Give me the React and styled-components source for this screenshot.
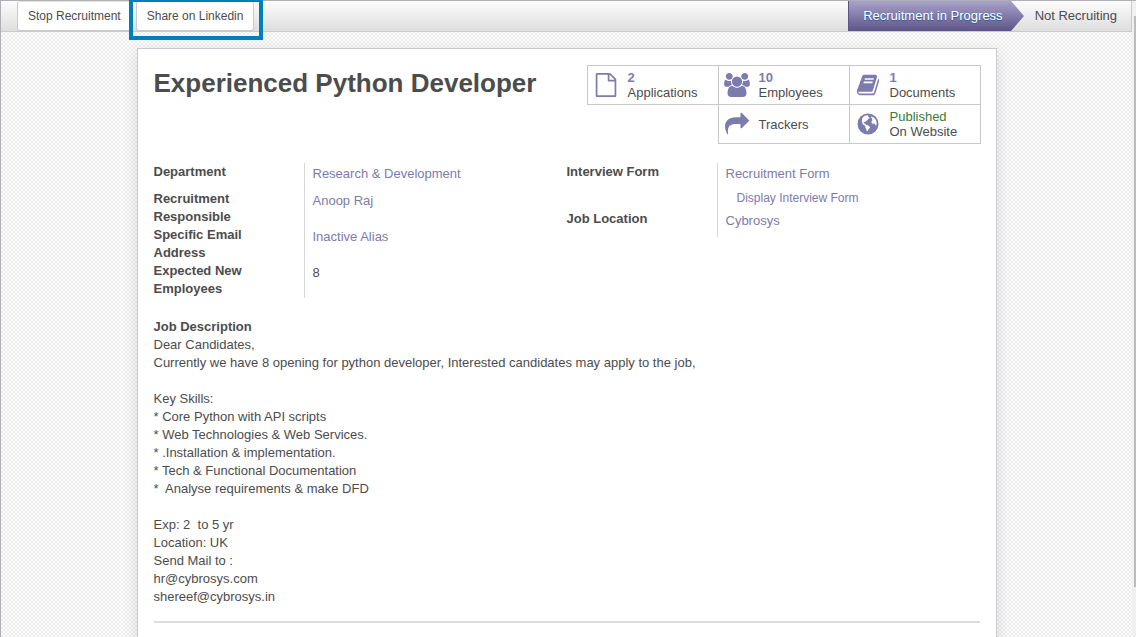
import React from "react";
import styled, { createGlobalStyle, css } from "styled-components";

const Global = createGlobalStyle`
  *, *::before, *::after { box-sizing: border-box; }
  html { height: 100%; }
  body {
    margin: 0;
    height: 100%;
    overflow: hidden;
    font: 13px/18px "Liberation Sans", Arial, sans-serif;
    color: #4c4c4c;
  }
  #root { height: 100%; }
`;

const Shell = styled.div`
  display: flex;
  height: 100%;
  border-top: 1px solid #afafb6;
  border-left: 1px solid #afafb6;
`;

const View = styled.div`
  flex: 1;
  min-width: 0;
  background: repeating-conic-gradient(#ececec 0 25%, #fdfdfd 0 50%) 0 0 / 4px 4px;
`;

const ScrollTrack = styled.div`
  flex: none;
  display: flex;
  justify-content: flex-end;
  width: 4px;
  padding-top: 15px;
  background: #f0f0f0;
`;

const ScrollThumb = styled.div`
  width: 2px;
  height: 92%;
  background: #bcbcbc;
`;

const Header = styled.header`
  display: flex;
  justify-content: space-between;
  height: 31px;
  border-right: 1px solid #cacaca;
  border-bottom: 1px solid #cacaca;
  background: linear-gradient(#fcfcfc, #dedede);
`;

const Actions = styled.div`
  display: flex;
  padding-left: 16px;
`;

const ActionButton = styled.button`
  height: 30px;
  padding: 0 10px;
  border: 1px solid #cacaca;
  border-top-color: #e4e4e4;
  border-radius: 3px;
  background: #fff;
  color: #4c4c4c;
  font: 12px/18px "Liberation Sans", Arial, sans-serif;
  white-space: nowrap;
`;

const Highlight = styled.div`
  position: relative;
  margin-left: 4px;

  &::after {
    content: "";
    position: absolute;
    inset: -3px -9px -9px -7px;
    border: 4px solid #0080bb;
    pointer-events: none;
  }
`;

const Stages = styled.ol`
  display: flex;
  margin: 0;
  padding: 0;
  list-style: none;
  line-height: 30px;
`;

const Stage = styled.li`
  display: flex;
  padding: 0 14px 0 11px;
  white-space: nowrap;

  ${(p) =>
    p.$active &&
    css`
      padding: 0 0 0 14px;
      color: #fff;
      text-shadow: 0 1px 1px #2c5590, 0 0 2px #6a92cf;
      border-left: 1px solid #5b5389;
      background: linear-gradient(#a9a2c8, #5d5589);
      background-size: calc(100% - 13px) 100%;
      background-repeat: no-repeat;
    `}
`;

const Arrow = styled.svg`
  display: block;
  width: 13px;
  height: 30px;
  margin-left: 8px;
`;

const Sheet = styled.main`
  max-width: 860px;
  min-height: 700px;
  margin: 16px auto 0;
  padding: 16px;
  border: 1px solid #c8c8d3;
  background: #fff;
  box-shadow: 0 5px 15px rgba(0, 0, 0, 0.12);
`;

const TitleRow = styled.div`
  display: flex;
  justify-content: space-between;
  align-items: flex-start;
`;

const Title = styled.h1`
  margin: 0;
  font-size: 26px;
  line-height: 36px;
`;

const Stats = styled.div`
  display: grid;
  grid-template-columns: repeat(3, 131px);
  grid-auto-rows: 39px;
  padding-bottom: 1px;
`;

const Stat = styled.button`
  display: flex;
  align-items: center;
  gap: 8px;
  margin: 0 -1px -1px 0;
  padding: 0 4px;
  border: 1px solid #c8c8c8;
  background: #fff;
  color: #4c4c4c;
  font: 13px/15px "Liberation Sans", Arial, sans-serif;
  text-align: left;

  &:nth-child(4) { grid-column: 2; }
`;

const StatIcon = styled.svg`
  flex: none;
  width: 28px;
  height: 24px;
  fill: #7c7bad;
`;

const StatText = styled.span`
  display: flex;
  flex-direction: column;
`;

const Count = styled.strong`
  color: #7c7bad;
`;

const Published = styled.span`
  color: #3a7d3a;
`;

const Groups = styled.div`
  display: grid;
  grid-template-columns: 1fr 1fr;
  align-items: start;
  margin-top: 19px;
`;

const Fields = styled.dl`
  display: grid;
  grid-template-columns: 150px 1fr;
  margin: 0;
`;

const Label = styled.dt`
  padding: 0 32px ${(p) => (p.$spaced ? 9 : 0)}px 0;
  font-weight: bold;
`;

const Value = styled.dd`
  margin: 0;
  padding: 2px 0 ${(p) => (p.$spaced ? 7 : 0)}px 8px;
  border-left: 1px solid #d8d8d8;
`;

const Link = styled.a`
  color: #7c7bad;
  text-decoration: none;
`;

const SubLink = styled(Link)`
  display: block;
  margin-top: 6px;
  padding: 0 0 3px 11px;
  font-size: 12px;
`;

const Description = styled.section`
  margin-top: 20px;
  padding-bottom: 15px;
  border-bottom: 2px solid #dcdcdc;
`;

const Heading = styled.h2`
  margin: 0;
  font-size: 13px;
  line-height: 18px;
`;

const Body = styled.p`
  margin: 0;
  white-space: pre-wrap;
`;

const DESCRIPTION = `Dear Candidates,
Currently we have 8 opening for python developer, Interested candidates may apply to the job,

Key Skills:
* Core Python with API scripts
* Web Technologies & Web Services.
* .Installation & implementation.
* Tech & Functional Documentation
*  Analyse requirements & make DFD

Exp: 2  to 5 yr
Location: UK
Send Mail to :
hr@cybrosys.com
shereef@cybrosys.in`;

const FileIcon = () => (
  <StatIcon viewBox="-150 0 2090 1792" aria-hidden="true">
    <path d="M1596 380q28 28 48 76t20 88v1152q0 40-28 68t-68 28h-1344q-40 0-68-28t-28-68v-1600q0-40 28-68t68-28h896q40 0 88 20t76 48zm-444-244v376h376q-10-29-22-41l-313-313q-12-12-41-22zm384 1528v-1024h-416q-40 0-68-28t-28-68v-416h-768v1536h1280z" />
  </StatIcon>
);

const UsersIcon = () => (
  <StatIcon viewBox="-40 0 2000 1792" aria-hidden="true">
    <path d="M593 896q-162 5-265 128h-134q-82 0-138-40.5t-56-118.5q0-353 124-353 6 0 43.5 21t97.5 42.5 119 21.5q67 0 133-23-5 37-5 66 0 139 81 256zm1071 637q0 120-73 189.5t-194 69.5h-874q-121 0-194-69.5t-73-189.5q0-53 3.5-103.5t14-109 26.5-108.5 43-97.5 62-81 85.5-53.5 111.5-20q10 0 43 21.5t73 48 107 48 135 21.5 135-21.5 107-48 73-48 43-21.5q61 0 111.5 20t85.5 53.5 62 81 43 97.5 26.5 108.5 14 109 3.5 103.5zm-1024-1277q0 106-75 181t-181 75-181-75-75-181 75-181 181-75 181 75 75 181zm704 384q0 159-112.5 271.5t-271.5 112.5-271.5-112.5-112.5-271.5 112.5-271.5 271.5-112.5 271.5 112.5 112.5 271.5zm576 225q0 78-56 118.5t-138 40.5h-134q-103-123-265-128 81-117 81-256 0-29-5-66 66 23 133 23 59 0 119-21.5t97.5-42.5 43.5-21q124 0 124 353zm-128-609q0 106-75 181t-181 75-181-75-75-181 75-181 181-75 181 75 75 181z" />
  </StatIcon>
);

const BookIcon = () => (
  <StatIcon viewBox="-150 0 2090 1792" aria-hidden="true">
    <path d="M1703 478q40 57 18 129l-275 906q-19 64-76.5 107.5t-122.5 43.5h-923q-77 0-148.5-53.5t-99.5-131.5q-24-67-2-127 0-4 3-27t4-37q1-8-3-21.5t-3-19.5q2-11 8-21t16.5-23.5 16.5-23.5q23-38 45-91.5t30-91.5q3-10 .5-30t-.5-28q3-11 17-28t17-23q21-36 42-92t25-90q1-9-2.5-32t.5-28q4-13 22-30.5t22-22.5q19-26 42.5-84.5t27.5-96.5q1-8-3-25.5t-2-26.5q2-8 9-18t18-23 17-21q8-12 16.5-30.5t15-35 16-36 19.5-32 26.5-23.5 36-11.5 47.5 5.5l-1 3q38-9 51-9h761q74 0 114 56t18 130l-274 906q-36 119-71.5 153.5t-128.5 34.5h-869q-27 0-38 15-11 16-1 43 24 70 144 70h923q29 0 56-15.5t35-41.5l300-987q7-22 5-57 38 15 59 43zm-1064 2q-4 13 2 22.5t20 9.5h608q13 0 25.5-9.5t16.5-22.5l21-64q4-13-2-22.5t-20-9.5h-608q-13 0-25.5 9.5t-16.5 22.5zm-83 256q-4 13 2 22.5t20 9.5h608q13 0 25.5-9.5t16.5-22.5l21-64q4-13-2-22.5t-20-9.5h-608q-13 0-25.5 9.5t-16.5 22.5z" />
  </StatIcon>
);

const ShareIcon = () => (
  <StatIcon viewBox="-150 0 2090 1792" aria-hidden="true">
    <path d="M1792 640q0 26-19 45l-512 512q-19 19-45 19t-45-19-19-45v-256h-224q-98 0-175.5 6t-154 21.5-133 42.5-105.5 69.5-80 101-48.5 138.5-17.5 181q0 55 5 123 0 6 2.5 23.5t2.5 26.5q0 15-8.5 25t-23.5 10q-16 0-28-17-7-9-13-22t-13.5-30-10.5-24q-127-285-127-451 0-199 53-333 162-403 875-403h224v-256q0-26 19-45t45-19 45 19l512 512q19 19 19 45z" />
  </StatIcon>
);

const GlobeIcon = () => (
  <StatIcon viewBox="0 0 28 24" aria-hidden="true">
    <circle cx="14" cy="12" r="10.5" />
    <path
      fill="#fff"
      d="M8.6 5.4l2.2-1.6 2.4-.5 1.4.6-.6.9 1.2.4.3 1.3-1.5.6-.5 1.1-1.6.8-.5 1.2-1-.4-.8.7.7.9 1 .3.5 1 1.5.3 1.6 1 1.2.9-.4 1.4-1.2.8-.6 1.7-1 .6-.6-2.2-1-1.7v-1.5l-1.7-1-1.3-1.7-.5-2.4.3-1.9zM17 4.4l1.9.6 2 1.6 1.2 2 .6 2.4-.3 2-1 .6-.6-1.7-1.2-.4-1.2.2-1-1.1.2-1.5 1.3-1-1-.5.4-1.1-1-.6z"
    />
  </StatIcon>
);

export default function App() {
  return (
    <>
      <Global />
      <Shell>
        <View>
          <Header>
            <Actions>
              <ActionButton type="button">Stop Recruitment</ActionButton>
              <Highlight>
                <ActionButton type="button">Share on Linkedin</ActionButton>
              </Highlight>
            </Actions>
            <Stages>
              <Stage $active aria-current="step">
                Recruitment in Progress
                <Arrow viewBox="0 0 13 30" aria-hidden="true">
                  <defs>
                    <linearGradient id="stage" x1="0" y1="0" x2="0" y2="1">
                      <stop offset="0" stopColor="#a9a2c8" />
                      <stop offset="1" stopColor="#5d5589" />
                    </linearGradient>
                  </defs>
                  <path d="M0 0L13 15L0 30Z" fill="url(#stage)" />
                </Arrow>
              </Stage>
              <Stage>Not Recruiting</Stage>
            </Stages>
          </Header>
          <Sheet>
            <TitleRow>
              <Title>Experienced Python Developer</Title>
              <Stats>
                <Stat type="button">
                  <FileIcon />
                  <StatText><Count>2</Count>Applications</StatText>
                </Stat>
                <Stat type="button">
                  <UsersIcon />
                  <StatText><Count>10</Count>Employees</StatText>
                </Stat>
                <Stat type="button">
                  <BookIcon />
                  <StatText><Count>1</Count>Documents</StatText>
                </Stat>
                <Stat type="button">
                  <ShareIcon />
                  <StatText>Trackers</StatText>
                </Stat>
                <Stat type="button">
                  <GlobeIcon />
                  <StatText><Published>Published</Published>On Website</StatText>
                </Stat>
              </Stats>
            </TitleRow>
            <Groups>
              <Fields>
                <Label $spaced>Department</Label>
                <Value><Link href="#department">Research &amp; Development</Link></Value>
                <Label>Recruitment Responsible</Label>
                <Value><Link href="#recruiter">Anoop Raj</Link></Value>
                <Label>Specific Email Address</Label>
                <Value><Link href="#alias">Inactive Alias</Link></Value>
                <Label>Expected New Employees</Label>
                <Value>8</Value>
              </Fields>
              <Fields>
                <Label>Interview Form</Label>
                <Value>
                  <Link href="#form">Recruitment Form</Link>
                  <SubLink href="#display">Display Interview Form</SubLink>
                </Value>
                <Label>Job Location</Label>
                <Value $spaced><Link href="#location">Cybrosys</Link></Value>
              </Fields>
            </Groups>
            <Description>
              <Heading>Job Description</Heading>
              <Body>{DESCRIPTION}</Body>
            </Description>
          </Sheet>
        </View>
        <ScrollTrack aria-hidden="true"><ScrollThumb /></ScrollTrack>
      </Shell>
    </>
  );
}
